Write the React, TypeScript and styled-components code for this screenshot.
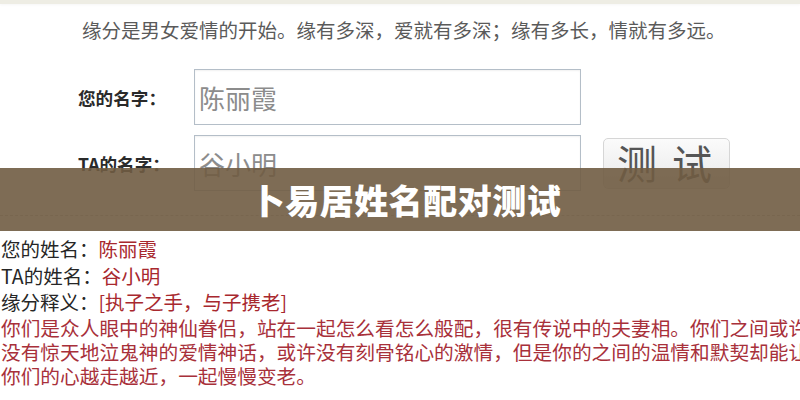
import React from 'react';
import styled, { createGlobalStyle } from 'styled-components';

const GlobalStyle = createGlobalStyle`
  html, body {
    margin: 0;
    padding: 0;
    background: #fff;
  }
  body {
    font-family: "Noto Sans CJK SC", "Noto Sans", sans-serif;
  }
`;

const Page = styled.div`
  position: relative;
  width: 800px;
  height: 400px;
  overflow: hidden;
  background: #fff;
`;

const TopStrip = styled.div`
  height: 4px;
  background: #eeede4;
  box-shadow: 0 1px 3px rgba(0, 0, 0, 0.04);
`;

const Intro = styled.p`
  margin: 14px 0 0 82px;
  font-size: 19.5px;
  line-height: 24px;
  color: #5a5a5a;
  white-space: nowrap;
`;

const Form = styled.div`
  display: flex;
  flex-direction: column;
  gap: 10px;
  margin-top: 27px;
`;

const Row = styled.div`
  display: flex;
  align-items: center;
`;

const Label = styled.label`
  width: 168px;
  padding-left: 78px;
  box-sizing: border-box;
  font-size: 17.6px;
  font-weight: 600;
  color: #2a2a2a;
  white-space: nowrap;
`;

const NameInput = styled.div`
  box-sizing: border-box;
  width: 387px;
  height: 56px;
  margin-left: 26px;
  padding-left: 4px;
  border: 1px solid #b4bec8;
  box-shadow: inset 0 1px 2px rgba(0, 0, 0, 0.06);
  display: flex;
  align-items: center;
  font-size: 26px;
  color: #8c8c8c;
  background: #fff;
`;

const TestButton = styled.button`
  box-sizing: border-box;
  width: 127px;
  height: 51px;
  margin-left: 22px;
  border: 1px solid #d6d6d6;
  border-radius: 5px;
  background: linear-gradient(#fbfbfb, #e8e8e8);
  font-family: "Noto Sans CJK SC", sans-serif;
  font-size: 40px;
  line-height: 1;
  color: #555;
  word-spacing: 6px;
  padding: 0 4px 2px 0;
`;

const Divider = styled.hr`
  margin: 24px 0 0;
  border: 0;
  border-top: 1px dashed #c4c4c4;
`;

const Results = styled.div`
  margin-top: 20px;
  padding-left: 1px;
`;

const ResultRow = styled.div`
  font-size: 19.5px;
  line-height: 26.5px;
  color: #262626;
  white-space: nowrap;
`;

const Value = styled.span`
  color: #a8282e;
`;

const Paragraph = styled.div`
  font-size: 19.7px;
  line-height: 24px;
  color: #a8303a;
`;

const Line = styled.div`
  white-space: nowrap;
`;

const Banner = styled.div`
  position: absolute;
  left: 0;
  right: 0;
  top: 168px;
  height: 63px;
  background: rgba(112, 92, 66, 0.9);
  display: flex;
  align-items: center;
  justify-content: center;
  padding-left: 12px;
`;

const BannerTitle = styled.h1`
  margin: 0;
  font-size: 34px;
  font-weight: 900;
  color: #fff;
  letter-spacing: 0.5px;
`;

const App: React.FC = () => {
  return (
    <>
      <GlobalStyle />
      <Page>
        <TopStrip />
        <Intro>缘分是男女爱情的开始。缘有多深，爱就有多深；缘有多长，情就有多远。</Intro>
        <Form>
          <Row>
            <Label>您的名字：</Label>
            <NameInput>陈丽霞</NameInput>
          </Row>
          <Row>
            <Label>TA的名字：</Label>
            <NameInput>谷小明</NameInput>
            <TestButton>测 试</TestButton>
          </Row>
        </Form>
        <Divider />
        <Results>
          <ResultRow>您的姓名：<Value>陈丽霞</Value></ResultRow>
          <ResultRow>TA的姓名：<Value>谷小明</Value></ResultRow>
          <ResultRow>缘分释义：<Value>[执子之手，与子携老]</Value></ResultRow>
          <Paragraph>
            <Line>你们是众人眼中的神仙眷侣，站在一起怎么看怎么般配，很有传说中的夫妻相。你们之间或许</Line>
            <Line>没有惊天地泣鬼神的爱情神话，或许没有刻骨铭心的激情，但是你的之间的温情和默契却能让</Line>
            <Line>你们的心越走越近，一起慢慢变老。</Line>
          </Paragraph>
        </Results>
        <Banner>
          <BannerTitle>卜易居姓名配对测试</BannerTitle>
        </Banner>
      </Page>
    </>
  );
};

export default App;
